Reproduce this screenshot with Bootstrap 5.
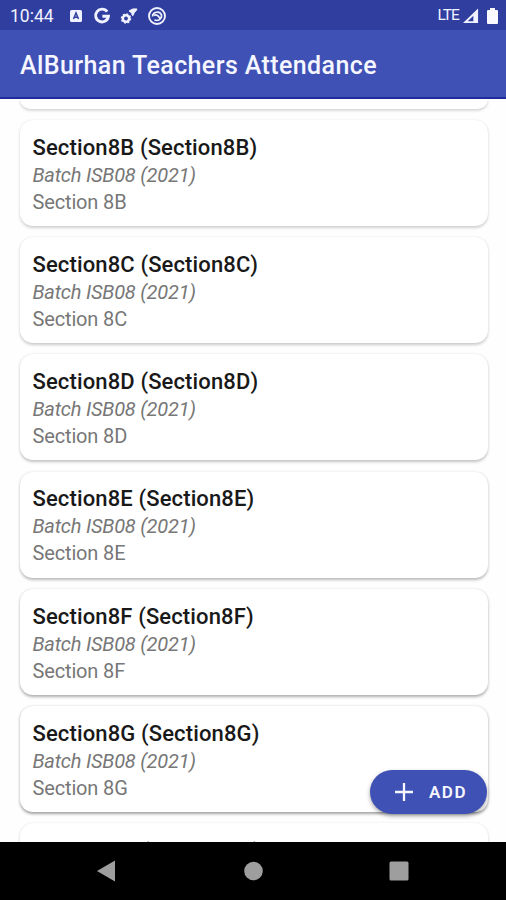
<!DOCTYPE html>
<html lang="en">
<head>
<meta charset="utf-8">
<meta name="viewport" content="width=device-width, initial-scale=1">
<title>AlBurhan Teachers Attendance</title>
<link href="https://cdn.jsdelivr.net/npm/bootstrap@5.3.0/dist/css/bootstrap.min.css" rel="stylesheet">
<style>
body{font-family:Roboto,"Liberation Sans",sans-serif;background:#fefefe;letter-spacing:0}
.status-bar{height:30px;background:#303f9f;padding:2px 8px 0 10px;color:#f0f2ff;font-size:17.5px}
.status-icons{gap:9px;margin-left:14px}
.status-icons svg{margin-top:-1px}
.lte{font-size:15.5px;letter-spacing:-.9px}
.app-bar{height:69px;background:#3f51b5;border-bottom:2px solid #1e2d9b;padding:4px 20px 0}
.app-title{font-size:25px;font-weight:500;line-height:32px;letter-spacing:.4px;color:#f5f6ff}
.section-list{padding:0 18.5px 0 20px;gap:11.2px}
.section-card{height:106px;flex:none;border:0;border-radius:13px;padding:12.8px 12.5px 12px;background:#fff;box-shadow:0 1.5px 3px rgba(0,0,0,var(--s,.18)),0 0 1px rgba(0,0,0,.06)}
.section-card.clipped{height:9.8px;padding:0;border-radius:0 0 13px 13px}
.section-card.peek{padding-top:14px}
.s2{--s:.2}.s3{--s:.23}.s4{--s:.27}.s5{--s:.31}.s6{--s:.36}
.sec-title{font-size:22px;font-weight:500;line-height:29px;letter-spacing:.13px;color:#191919}
.sec-batch,.sec-name{font-size:20px;line-height:27px;color:#777}
.sec-batch{letter-spacing:-.22px}
.sec-name{letter-spacing:-.15px}
.add-btn{right:19px;bottom:28px;width:117px;height:44px;border-radius:22px;background:#3f51b5;color:#f5f6ff;font-size:17px;font-weight:600;letter-spacing:1.5px;gap:16px;padding:2px 18px 0 25px;box-shadow:0 2px 4px rgba(0,0,0,.35)}
.add-btn svg{margin-top:-2px}
.add-btn:hover{background:#3f51b5;color:#fff}
.nav-bar{height:58px;background:#000}
</style>
<script src="https://cdn.jsdelivr.net/npm/bootstrap@5.3.0/dist/js/bootstrap.bundle.min.js"></script>
</head>
<body>
<div class="d-flex flex-column vh-100 overflow-hidden">
  <header class="status-bar d-flex align-items-center flex-shrink-0">
    <span class="clock">10:44</span>
    <div class="status-icons d-flex align-items-center">
      <svg width="16" height="18" viewBox="0 0 16 18"><rect x="2" y="3" width="12" height="12" rx="1.5" fill="#f0f2ff"/><path d="M5.500 12L8 6l2.500 6M6.300 10.300h3.400" fill="none" stroke="#303f9f" stroke-width="1.500"/></svg>
      <svg width="18" height="18" viewBox="0 0 18 18"><path d="M14.200 4.700A6.400 6.400 0 1 0 15.400 9.300H9.400" fill="none" stroke="#f0f2ff" stroke-width="2.900"/></svg>
      <svg width="18" height="18" viewBox="0 0 18 18"><circle cx="6" cy="11.500" r="3.200" fill="none" stroke="#f0f2ff" stroke-width="2.600"/><circle cx="6" cy="11.500" r="4.600" fill="none" stroke="#f0f2ff" stroke-width="1.300" stroke-dasharray="1.800 1.800"/><path d="M9 4Q12.500 1 17 2Q16.500 4 14.500 5.200L12.800 8.800Q11.500 8 12 6.200Z" fill="#f0f2ff" stroke="#f0f2ff" stroke-linejoin="round"/></svg>
      <svg width="20" height="20" viewBox="0 0 20 20" fill="none" stroke="#f0f2ff"><circle cx="10" cy="10" r="8" stroke-width="1.900"/><path d="M5.500 10.500a4.700 4.700 0 0 1 9-1.500 4.700 4.700 0 0 1-7 4.800M7 9.500q3-2 6 3" stroke-width="1.700"/></svg>
    </div>
    <div class="d-flex align-items-center ms-auto">
      <span class="lte">LTE</span>
      <svg class="ms-1" width="16" height="18" viewBox="0 0 17 18"><path fill-rule="evenodd" d="M0 16.500L16 1V16.500ZM5 14.500H11V8.700Z" fill="#f0f2ff"/></svg>
      <svg class="ms-2" width="11" height="18" viewBox="0 0 11 18"><path d="M3 1h5v2h2q1 0 1 1v12q0 1-1 1H1q-1 0-1-1V4q0-1 1-1h2z" fill="#fafaff"/></svg>
    </div>
  </header>
  <nav class="app-bar d-flex align-items-center flex-shrink-0"><h1 class="app-title m-0">AlBurhan Teachers Attendance</h1></nav>
  <main class="flex-grow-1 overflow-hidden position-relative">
    <div class="section-list d-flex flex-column">
      <div class="card section-card clipped"></div>
      <article class="card section-card"><h2 class="sec-title m-0">Section8B (Section8B)</h2><em class="sec-batch">Batch ISB08 (2021)</em><span class="sec-name">Section 8B</span></article>
      <article class="card section-card s2"><h2 class="sec-title m-0">Section8C (Section8C)</h2><em class="sec-batch">Batch ISB08 (2021)</em><span class="sec-name">Section 8C</span></article>
      <article class="card section-card s3"><h2 class="sec-title m-0">Section8D (Section8D)</h2><em class="sec-batch">Batch ISB08 (2021)</em><span class="sec-name">Section 8D</span></article>
      <article class="card section-card s4"><h2 class="sec-title m-0">Section8E (Section8E)</h2><em class="sec-batch">Batch ISB08 (2021)</em><span class="sec-name">Section 8E</span></article>
      <article class="card section-card s5"><h2 class="sec-title m-0">Section8F (Section8F)</h2><em class="sec-batch">Batch ISB08 (2021)</em><span class="sec-name">Section 8F</span></article>
      <article class="card section-card s6"><h2 class="sec-title m-0">Section8G (Section8G)</h2><em class="sec-batch">Batch ISB08 (2021)</em><span class="sec-name">Section 8G</span></article>
      <article class="card section-card peek"><h2 class="sec-title m-0">Section8H (Section8H)</h2></article>
    </div>
    <button class="btn add-btn position-absolute d-flex align-items-center border-0" type="button">
      <svg class="flex-shrink-0" width="18" height="18" viewBox="0 0 18 18"><path d="M9 0v18M0 9h18" stroke="#f5f6ff" stroke-width="2.300"/></svg>ADD
    </button>
  </main>
  <footer class="nav-bar flex-shrink-0 d-flex align-items-center justify-content-center">
    <svg width="506" height="58" viewBox="0 0 506 58" fill="#9e9e9e"><path d="M97 29L115 18.500V39.500Z"/><circle cx="253.500" cy="29" r="9.300"/><rect x="389.500" y="19.500" width="19" height="19" rx="1.500"/></svg>
  </footer>
</div>
</body>
</html>
